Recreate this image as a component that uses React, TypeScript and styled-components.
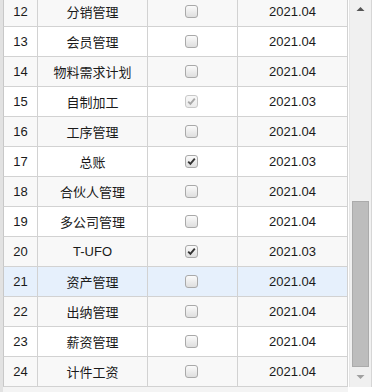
import React from "react";
import styled, { createGlobalStyle, css } from "styled-components";

type Status = "none" | "checked" | "locked";

interface ModuleRow {
  id: number;
  name: string;
  status: Status;
  period: string;
}

const ROWS: ModuleRow[] = [
  { id: 12, name: "分销管理", status: "none", period: "2021.04" },
  { id: 13, name: "会员管理", status: "none", period: "2021.04" },
  { id: 14, name: "物料需求计划", status: "none", period: "2021.04" },
  { id: 15, name: "自制加工", status: "locked", period: "2021.03" },
  { id: 16, name: "工序管理", status: "none", period: "2021.04" },
  { id: 17, name: "总账", status: "checked", period: "2021.03" },
  { id: 18, name: "合伙人管理", status: "none", period: "2021.04" },
  { id: 19, name: "多公司管理", status: "none", period: "2021.04" },
  { id: 20, name: "T-UFO", status: "checked", period: "2021.03" },
  { id: 21, name: "资产管理", status: "none", period: "2021.04" },
  { id: 22, name: "出纳管理", status: "none", period: "2021.04" },
  { id: 23, name: "薪资管理", status: "none", period: "2021.04" },
  { id: 24, name: "计件工资", status: "none", period: "2021.04" },
];

const SELECTED_ID = 21;

function App() {
  return (
    <>
      <GlobalStyle />
      <Frame>
        <Table>
          {ROWS.map((row, i) => (
            <Row
              key={row.id}
              $striped={row.id % 2 === 0}
              $selected={row.id === SELECTED_ID}
              $first={i === 0}
            >
              <Cell $width={34}>{row.id}</Cell>
              <Cell $width={110}>{row.name}</Cell>
              <Cell $width={90}>
                <CheckBox $status={row.status}>
                  {row.status !== "none" && (
                    <svg width="9" height="9" viewBox="0 0 9 9">
                      <path
                        d="M1.2 4.6 L3.4 6.9 L7.8 1.6"
                        fill="none"
                        stroke="currentColor"
                        strokeWidth="1.9"
                      />
                    </svg>
                  )}
                </CheckBox>
              </Cell>
              <Cell $width={110}>{row.period}</Cell>
            </Row>
          ))}
        </Table>
        <Gap />
        <ScrollBar>
          <Arrow $height={17}>
            <svg width="9" height="6" viewBox="0 0 9 6">
              <path d="M0.5 5 L4.5 1 L8.5 5 Z" fill="#555" />
            </svg>
          </Arrow>
          <Track>
            <Thumb />
          </Track>
          <Arrow $height={20}>
            <svg width="9" height="6" viewBox="0 0 9 6">
              <path d="M0.5 1 L4.5 5 L8.5 1 Z" fill="#a0a0a0" />
            </svg>
          </Arrow>
        </ScrollBar>
      </Frame>
    </>
  );
}

export default App;

const GlobalStyle = createGlobalStyle`
  body {
    margin: 0;
    background: #ffffff;
    font-family: "Liberation Sans", "Noto Sans CJK SC", Arial, sans-serif;
  }
`;

const Frame = styled.div`
  display: flex;
  align-items: flex-start;
  width: 378px;
  height: 392px;
  overflow: hidden;
  background: #ffffff;
`;

const Table = styled.div`
  display: flex;
  flex-direction: column;
  width: 348px;
  height: 392px;
  overflow: hidden;
  background: #f4f4f4;
  border-left: 3px solid #e2e2e2;
  box-sizing: border-box;
`;

const Row = styled.div<{ $striped: boolean; $selected: boolean; $first: boolean }>`
  display: flex;
  flex-shrink: 0;
  height: 30px;
  margin-top: ${(p) => (p.$first ? "-3px" : "0")};
  box-sizing: border-box;
  border-left: 1px solid #c8c8c8;
  border-bottom: 1px solid #d2d2d2;
  background: ${(p) =>
    p.$selected ? "#e6f0fc" : p.$striped ? "#f8f8f8" : "#ffffff"};
`;

const Cell = styled.div<{ $width: number }>`
  display: flex;
  align-items: center;
  justify-content: center;
  width: ${(p) => p.$width}px;
  flex-shrink: 0;
  padding-bottom: 1px;
  box-sizing: border-box;
  border-right: 1px solid #d2d2d2;
  color: #1a1a1a;
  font-size: 13px;
  white-space: nowrap;
`;

const CheckBox = styled.span<{ $status: Status }>`
  display: flex;
  align-items: center;
  justify-content: center;
  width: 13px;
  height: 13px;
  margin-left: -2px;
  box-sizing: border-box;
  border: 1px solid #a9a9a9;
  border-radius: 3px;
  background: linear-gradient(#fbfbfb, #dedede);
  color: #333333;
  ${(p) =>
    p.$status === "locked" &&
    css`
      border-color: #c8c8c8;
      background: linear-gradient(#f8f8f8, #ebebeb);
      color: #a8a8a8;
    `}
`;

const Gap = styled.div`
  width: 1px;
  height: 392px;
  flex-shrink: 0;
`;

const ScrollBar = styled.div`
  display: flex;
  flex-direction: column;
  width: 23px;
  height: 387px;
  flex-shrink: 0;
  box-sizing: border-box;
  background: #f0f0f0;
  border-left: 1px solid #e6e6e6;
  border-right: 1px solid #d6d6d6;
`;

const Arrow = styled.div<{ $height: number }>`
  display: flex;
  align-items: center;
  justify-content: center;
  height: ${(p) => p.$height}px;
  flex-shrink: 0;
`;

const Track = styled.div`
  display: flex;
  flex-direction: column;
  justify-content: flex-end;
  flex: 1;
  padding: 0 2px;
`;

const Thumb = styled.div`
  height: 166px;
  box-sizing: border-box;
  background: #bdbdbd;
  border: 1px solid #ababab;
`;
